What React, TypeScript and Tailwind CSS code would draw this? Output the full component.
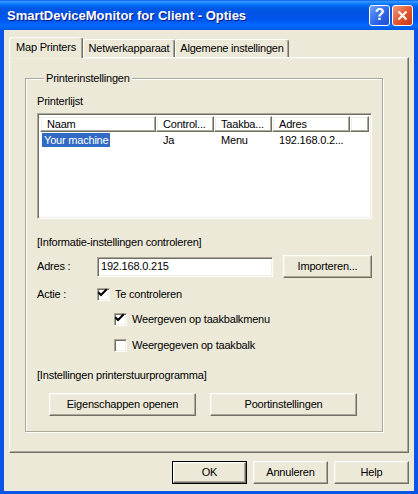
import { ReactNode } from "react";

const raised =
  "border border-t-white border-l-white border-r-[#716f64] border-b-[#716f64] shadow-[inset_-1px_-1px_0_#aca899,inset_1px_1px_0_#f1efe2]";
const sunken =
  "border border-t-[#aca899] border-l-[#aca899] border-r-white border-b-white shadow-[inset_1px_1px_0_#716f64,inset_-1px_-1px_0_#f1efe2]";

function Button({ children, width, isDefault }: { children: ReactNode; width: string; isDefault?: boolean }) {
  if (isDefault) {
    return (
      <div className={`${width} h-[23px] border border-black`}>
        <div className={`${raised} h-full flex items-center justify-center`}>{children}</div>
      </div>
    );
  }
  return <div className={`${width} h-[23px] ${raised} flex items-center justify-center`}>{children}</div>;
}

function Checkbox({ checked }: { checked: boolean }) {
  return (
    <div className={`w-[13px] h-[13px] bg-white shrink-0 ${sunken}`}>
      {checked && (
        <svg width="11" height="11" viewBox="0 0 11 11" className="block -mt-px -ml-px">
          <path d="M2 5 L4 7 L9 2" stroke="#000" strokeWidth="2" fill="none" strokeLinecap="square" />
        </svg>
      )}
    </div>
  );
}

function Tab({ label, width, active }: { label: string; width: string; active?: boolean }) {
  return (
    <div
      className={`${width} flex items-center justify-center border-t border-l border-white border-r border-r-[#716f64] rounded-t-[3px] shadow-[inset_-1px_0_0_#aca899] bg-[#ece9d8] ${
        active ? "h-[21px] relative z-10 -mb-px pb-[2px]" : "h-[18px]"
      }`}
    >
      {label}
    </div>
  );
}

const columns = [
  { title: "Naam", width: "w-[116px]" },
  { title: "Control...", width: "w-[58px]" },
  { title: "Taakba...", width: "w-[58px]" },
  { title: "Adres", width: "w-[78px]" },
];

export default function App() {
  return (
    <div
      className="w-[418px] h-[494px] flex flex-col bg-[#0a55e6] text-[11px] leading-[13px] tracking-[-0.2px] text-black"
      style={{ fontFamily: '"Liberation Sans", Arial, sans-serif' }}
    >
      {/* title bar */}
      <div className="h-[30px] shrink-0 flex items-center pl-[7px] pr-[5px] bg-[linear-gradient(180deg,#0058ee_0%,#3593ff_4%,#288eff_8%,#127dff_12%,#036ffc_16%,#0262ee_22%,#0057e5_30%,#0054e3_40%,#0055eb_60%,#005bf5_72%,#026afe_84%,#0062ef_94%,#0057e5_100%)]">
        <span className="flex-1 text-white font-bold text-[13px] tracking-normal [text-shadow:1px_1px_0_#0a1883]">
          SmartDeviceMonitor for Client - Opties
        </span>
        <div className="flex gap-[2px]">
          <div className="w-[21px] h-[21px] rounded-[3px] border border-white bg-[linear-gradient(135deg,#6fa2fb,#2a63e8_60%,#1f4fd3)] flex items-center justify-center text-white font-bold text-[16px] leading-none">
            ?
          </div>
          <div className="w-[21px] h-[21px] rounded-[3px] border border-white bg-[linear-gradient(135deg,#f29a7c,#e2542a_55%,#c8371a)] flex items-center justify-center">
            <svg width="11" height="11" viewBox="0 0 11 11">
              <path d="M1.5 1.5 L9.5 9.5 M9.5 1.5 L1.5 9.5" stroke="#fff" strokeWidth="2" />
            </svg>
          </div>
        </div>
      </div>

      {/* window body */}
      <div className="flex-1 mx-[4px] mb-[3px] bg-[#ece9d8] pt-[7px] px-[5px] flex flex-col">
        <div className="flex items-end h-[20px]">
          <Tab label="Map Printers" width="w-[74px]" active />
          <Tab label="Netwerkapparaat" width="w-[92px]" />
          <Tab label="Algemene instellingen" width="w-[114px]" />
        </div>

        <div className={`h-[396px] ${raised} pt-[14px] pl-[15px]`}>
          <fieldset className="w-[358px] border border-[#aca899] shadow-[1px_1px_0_#fff,inset_1px_1px_0_#fff] pl-[11px] pb-[15px]">
            <legend className="ml-[7px] px-[2px] bg-[#ece9d8]">Printerinstellingen</legend>

            <div className="mt-[10px] h-[13px]">Printerlijst</div>

            <div className={`mt-[5px] w-[335px] h-[106px] bg-white ${sunken} p-[2px]`}>
              <div className="flex h-[16px]">
                {columns.map((c) => (
                  <div key={c.title} className={`${c.width} ${raised} pl-[6px] flex items-center`}>
                    {c.title}
                  </div>
                ))}
                <div className={`flex-1 ${raised}`} />
              </div>
              <div className="flex h-[14px] mt-px items-center">
                <div className="w-[116px] pl-[2px]">
                  <span className="bg-[#316ac5] text-white px-[2px] inline-block h-[14px] leading-[14px]">
                    Your machine
                  </span>
                </div>
                <div className="w-[58px] pl-[7px]">Ja</div>
                <div className="w-[58px] pl-[7px]">Menu</div>
                <div className="w-[78px] pl-[7px]">192.168.0.2...</div>
              </div>
            </div>

            <div className="mt-[17px] h-[13px]">[Informatie-instellingen controleren]</div>

            <div className="mt-[6px] flex items-center h-[23px]">
              <div className="w-[60px]">Adres :</div>
              <div className={`w-[176px] h-[20px] bg-white ${sunken} px-[3px] flex items-center`}>192.168.0.215</div>
              <div className="ml-[10px]">
                <Button width="w-[89px]">Importeren...</Button>
              </div>
            </div>

            <div className="mt-[10px] flex items-center h-[13px]">
              <div className="w-[60px]">Actie :</div>
              <Checkbox checked />
              <span className="ml-[5px]">Te controleren</span>
            </div>

            <div className="mt-[12px] flex items-center h-[13px] pl-[77px]">
              <Checkbox checked />
              <span className="ml-[5px]">Weergeven op taakbalkmenu</span>
            </div>

            <div className="mt-[13px] flex items-center h-[13px] pl-[77px]">
              <Checkbox checked={false} />
              <span className="ml-[5px]">Weergegeven op taakbalk</span>
            </div>

            <div className="mt-[17px] h-[13px]">[Instellingen printerstuurprogramma]</div>

            <div className="mt-[11px] flex gap-[14px] pl-[12px]">
              <Button width="w-[147px]">Eigenschappen openen</Button>
              <Button width="w-[147px]">Poortinstellingen</Button>
            </div>
          </fieldset>
        </div>

        <div className="mt-[8px] flex justify-end gap-[6px]">
          <Button width="w-[75px]" isDefault>
            OK
          </Button>
          <Button width="w-[75px]">Annuleren</Button>
          <Button width="w-[75px]">Help</Button>
        </div>
      </div>
    </div>
  );
}
